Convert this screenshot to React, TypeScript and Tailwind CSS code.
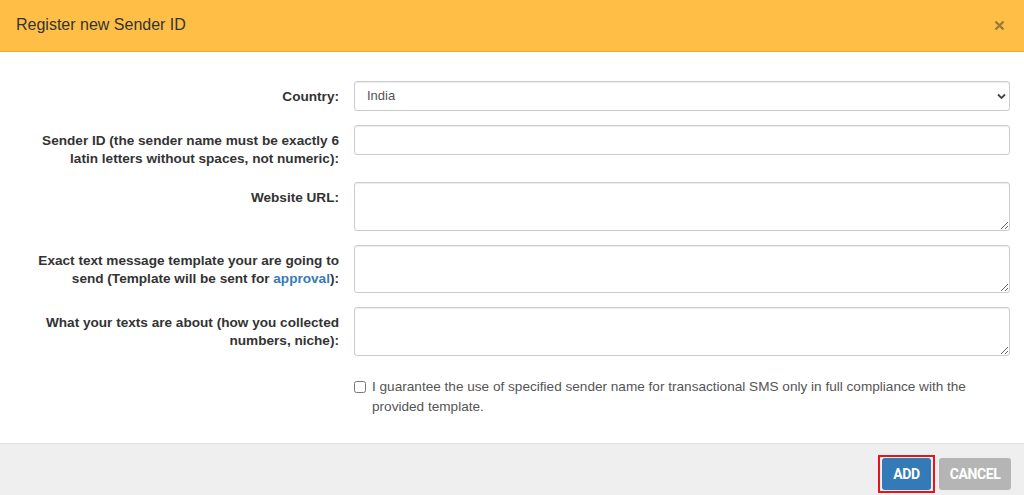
import React from 'react';

const labelCls =
  "w-[339px] shrink-0 pl-[28px] pt-[7px] text-right text-[13.6px] font-bold leading-[18px] text-[#333]";
const fieldCls =
  "block w-[656px] rounded-[3px] border border-[#ccc] bg-white px-3 text-[13px] text-[#555] shadow-[inset_0_1px_1px_rgba(0,0,0,0.075)] outline-none";

const Row: React.FC<{ label: React.ReactNode; children: React.ReactNode }> = ({ label, children }) => (
  <div className="mb-[14px] flex">
    <label className={labelCls}>{label}</label>
    <div className="ml-[15px]">{children}</div>
  </div>
);

export default function App() {
  return (
    <div className="flex h-[495px] w-[1024px] flex-col bg-white font-['Liberation_Sans',Arial,sans-serif]">
      <header className="flex h-[52px] shrink-0 items-center justify-between border-b border-[#f3ab2c] bg-[#ffbf47] pl-4 pr-[19px]">
        <h4 className="pb-[2px] text-[16px] text-[#333]">Register new Sender ID</h4>
        <button className="text-[#9c7a3a]">
          <svg width="11" height="11" viewBox="0 0 11 11">
            <path d="M1.5 1.5l8 8M9.5 1.5l-8 8" stroke="currentColor" strokeWidth="2.4" />
          </svg>
        </button>
      </header>

      <div className="flex-1 pt-[29px]">
        <Row label="Country:">
          <div className="relative">
            <select className={`${fieldCls} h-[30px] appearance-none`} defaultValue="India">
              <option>India</option>
            </select>
            <svg className="pointer-events-none absolute right-[4px] top-[12px]" width="9" height="7" viewBox="0 0 9 7">
              <path d="M1 1.5l3.5 3.5L8 1.5" fill="none" stroke="#444" strokeWidth="1.8" />
            </svg>
          </div>
        </Row>
        <Row label="Sender ID (the sender name must be exactly 6 latin letters without spaces, not numeric):">
          <input className={`${fieldCls} h-[30px]`} />
        </Row>
        <Row label="Website URL:">
          <textarea className={`${fieldCls} h-[49px] py-1`} />
        </Row>
        <Row
          label={
            <>
              Exact text message template your are going to send (Template will be sent for{' '}
              <a className="text-[#337ab7]">approval</a>):
            </>
          }
        >
          <textarea className={`${fieldCls} h-[48px] py-1`} />
        </Row>
        <Row label="What your texts are about (how you collected numbers, niche):">
          <textarea className={`${fieldCls} h-[49px] py-1`} />
        </Row>

        <div className="ml-[354px] flex items-start pt-[7px]">
          <input type="checkbox" className="mt-[4px] h-[12px] w-[12px] shrink-0" />
          <span className="ml-[6px] w-[610px] text-[13.6px] leading-[20px] text-[#555]">
            I guarantee the use of specified sender name for transactional SMS only in full compliance with the
            provided template.
          </span>
        </div>
      </div>

      <footer className="flex h-[52px] shrink-0 items-start justify-end gap-1 border-t border-[#e2e2e2] bg-[#efefef] pr-[13px] pt-[11px]">
        <span className="border-2 border-[#e8141b] px-[2px] py-[1px]">
          <button className="block h-[32px] w-[49px] rounded-[3px] bg-[#337ab7] font-['Roboto',sans-serif] text-[14px] font-bold tracking-[-0.4px] text-white">
            ADD
          </button>
        </span>
        <button className="mt-[3px] h-[32px] w-[72px] rounded-[3px] bg-[#b5b5b5] font-['Roboto',sans-serif] text-[14px] font-bold tracking-[-0.4px] text-white">
          CANCEL
        </button>
      </footer>
    </div>
  );
}
